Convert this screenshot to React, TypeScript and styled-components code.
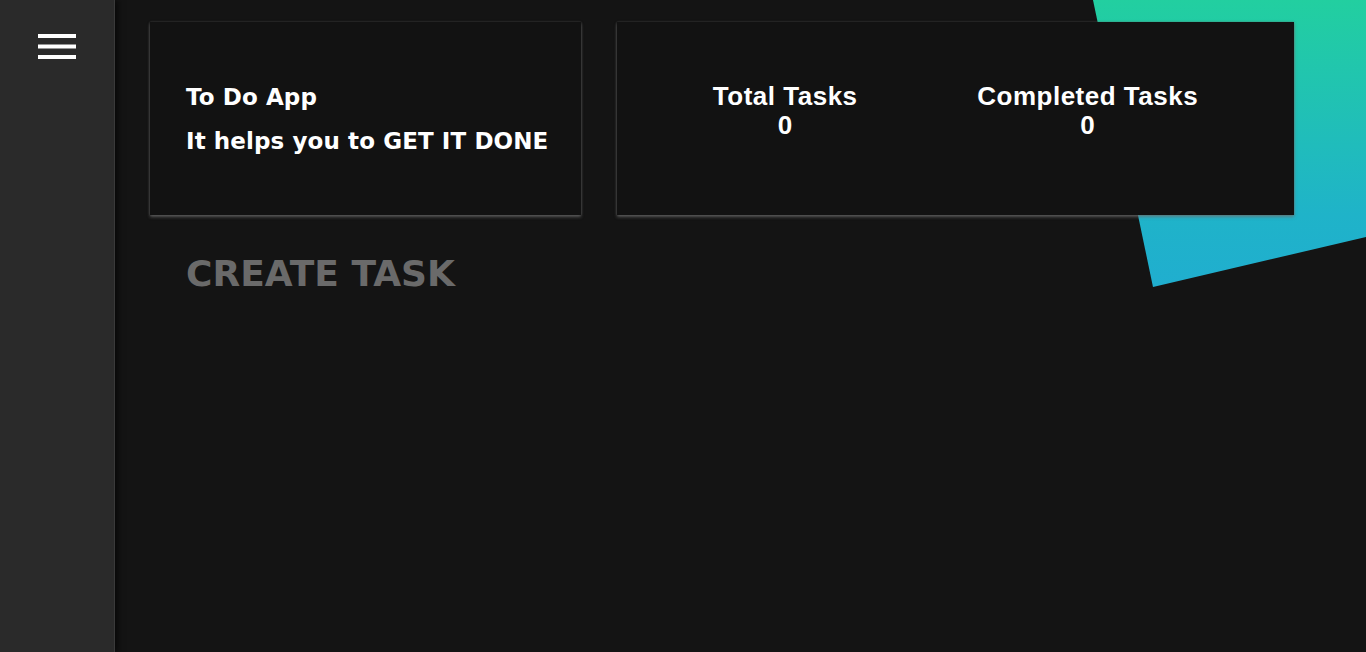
import styled, { createGlobalStyle } from 'styled-components';

const GlobalStyle = createGlobalStyle`
  html, body {
    margin: 0;
    padding: 0;
    background: #141414;
    font-family: 'DejaVu Sans', 'Liberation Sans', sans-serif;
    overflow: hidden;
  }
`;

const stats = [
  { label: 'Total Tasks', value: 0 },
  { label: 'Completed Tasks', value: 0 },
];

const App = () => {
  return (
    <Layout>
      <GlobalStyle />
      <Sidebar>
        <MenuButton aria-label="menu">
          <svg width="38" height="28" viewBox="0 0 38 28">
            <rect x="0" y="1" width="38" height="4" fill="#fff" />
            <rect x="0" y="11.5" width="38" height="4" fill="#fff" />
            <rect x="0" y="22" width="38" height="4" fill="#fff" />
          </svg>
        </MenuButton>
      </Sidebar>

      <Main>
        <Decoration />
        <CardRow>
          <IntroCard>
            <CardLine>To Do App</CardLine>
            <CardLine>It helps you to GET IT DONE</CardLine>
          </IntroCard>
          <StatsCard>
            {stats.map((s) => (
              <Stat key={s.label}>
                <StatText>{s.label}</StatText>
                <StatText>{s.value}</StatText>
              </Stat>
            ))}
          </StatsCard>
        </CardRow>
        <SectionTitle>CREATE TASK</SectionTitle>
      </Main>
    </Layout>
  );
};

export default App;

// ---------- styles ----------

const Layout = styled.div`
  display: flex;
  height: 100vh;
  overflow: hidden;
`;

const Sidebar = styled.aside`
  width: 115px;
  flex-shrink: 0;
  background: #2a2a2a;
  border-right: 1px solid #3a3a3a;
  box-shadow: 3px 0 6px rgba(0, 0, 0, 0.6);
  position: relative;
  z-index: 2;
  display: flex;
  justify-content: center;
  align-items: flex-start;
  padding-top: 33px;
  box-sizing: border-box;
`;

const MenuButton = styled.button`
  background: none;
  border: none;
  padding: 0;
  cursor: pointer;
  svg {
    display: block;
  }
`;

const Main = styled.main`
  flex: 1;
  position: relative;
  padding: 22px 0 0 35px;
`;

const Decoration = styled.div`
  position: absolute;
  top: 0;
  right: 0;
  width: 273px;
  height: 287px;
  background: linear-gradient(180deg, #22cfa0 0%, #1fb3c9 75%, #20aecf 100%);
  clip-path: polygon(0 0, 100% 0, 100% 237px, 60px 100%);
`;

const CardRow = styled.div`
  position: relative;
  display: flex;
  gap: 36px;
`;

const Card = styled.section`
  height: 193px;
  box-sizing: border-box;
  background: #121212;
  box-shadow: 0 2px 3px rgba(110, 110, 110, 0.7), 0 0 2px rgba(90, 90, 90, 0.6);
`;

const IntroCard = styled(Card)`
  width: 431px;
  padding: 0 36px;
  display: flex;
  flex-direction: column;
  justify-content: center;
  gap: 14px;
`;

const CardLine = styled.h2`
  margin: 0;
  font-size: 23px;
  line-height: 30px;
  font-weight: 700;
  letter-spacing: 0.1px;
  color: #fff;
  white-space: nowrap;
`;

const StatsCard = styled(Card)`
  width: 677px;
  padding: 60px 36px 0;
  display: flex;
  justify-content: space-around;
  align-items: flex-start;
`;

const Stat = styled.div`
  display: flex;
  flex-direction: column;
  align-items: center;
`;

const StatText = styled.span`
  font-family: 'Liberation Sans', sans-serif;
  font-size: 26px;
  line-height: 29px;
  font-weight: 700;
  letter-spacing: 0.5px;
  color: #fff;
`;

const SectionTitle = styled.h1`
  position: relative;
  margin: 37px 0 0 36px;
  font-size: 36px;
  line-height: 43px;
  font-weight: 800;
  color: #6a6a6a;
`;
